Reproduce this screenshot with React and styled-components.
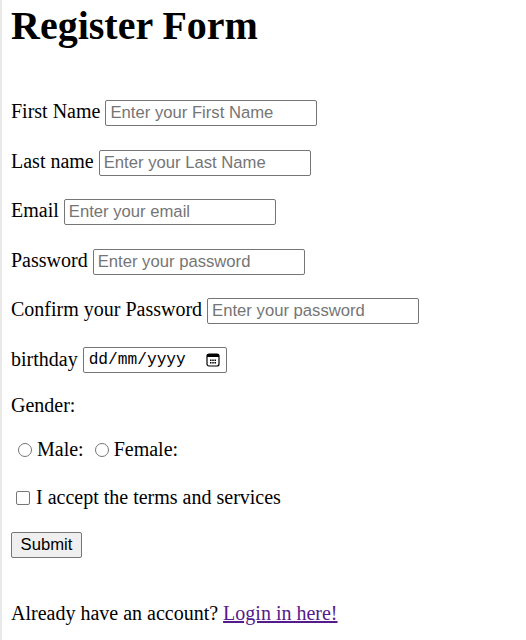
import React from 'react';
import styled, { createGlobalStyle } from 'styled-components';

const GlobalStyle = createGlobalStyle`
  html, body {
    margin: 0;
    padding: 0;
    background: #ffffff;
  }
  body {
    font-family: "Liberation Serif", "Times New Roman", serif;
    font-size: 20px;
    color: #000000;
  }
`;

const Page = styled.div`
  min-height: 100vh;
  box-sizing: border-box;
  border-left: 2px solid #e9e9e9;
  padding: 3px 0 0 9px;
`;

const Title = styled.h1`
  margin: 0;
  font-size: 40px;
  line-height: 46px;
  font-weight: bold;
`;

const Form = styled.form`
  display: flex;
  flex-direction: column;
  align-items: flex-start;
`;

const Field = styled.div`
  display: flex;
  align-items: ${(p) => (p.$center ? 'center' : 'baseline')};
  gap: 5px;
  margin-top: ${(p) => p.$mt || 23.5}px;
  line-height: 23px;
`;

const Label = styled.label`
  white-space: nowrap;
`;

const TextInput = styled.input`
  box-sizing: border-box;
  width: 212px;
  height: 26px;
  margin: 0;
  padding: 0 4px;
  border: 1px solid #767676;
  border-radius: 2px;
  font-family: "Liberation Sans", Arial, sans-serif;
  font-size: 16.67px;
  color: #000;
  background: #fff;

  &::placeholder {
    color: #757575;
  }
`;

const DateBox = styled.div`
  box-sizing: border-box;
  display: inline-flex;
  align-items: center;
  width: 144px;
  height: 26px;
  padding: 0 6px 0 5px;
  border: 1px solid #767676;
  border-radius: 2px;
  background: #fff;
`;

const DateInput = styled.input`
  flex: 1;
  min-width: 0;
  border: none;
  outline: none;
  padding: 0;
  margin: 0;
  font-family: "Liberation Mono", "DejaVu Sans Mono", monospace;
  font-size: 16.2px;
  color: #000;
  background: transparent;

  &::placeholder {
    color: #000;
  }
`;

const Plain = styled.p`
  margin: ${(p) => p.$mt}px 0 0;
  line-height: 23px;
`;

const ChoiceRow = styled.div`
  display: flex;
  align-items: baseline;
  margin-top: ${(p) => p.$mt}px;
  line-height: 23px;
`;

const Radio = styled.input.attrs({ type: 'radio' })`
  appearance: none;
  flex-shrink: 0;
  box-sizing: border-box;
  width: 14px;
  height: 14px;
  margin: 0 5px 0 ${(p) => p.$ml}px;
  border: 1px solid #767676;
  border-radius: 50%;
  background: #fff;
  align-self: center;
  position: relative;
  top: 1px;

  &:checked {
    border: 4px solid #0075ff;
  }
`;

const Checkbox = styled.input.attrs({ type: 'checkbox' })`
  appearance: none;
  flex-shrink: 0;
  box-sizing: border-box;
  width: 14px;
  height: 14px;
  margin: 0 6px 0 5px;
  border: 1px solid #767676;
  border-radius: 2px;
  background: #fff;
  align-self: center;
  position: relative;
  top: 1px;

  &:checked {
    background: #0075ff;
    border-color: #0075ff;
  }
`;

const Button = styled.button`
  margin-top: 23.5px;
  box-sizing: border-box;
  width: 71px;
  height: 26px;
  padding: 0;
  border: 1px solid #767676;
  border-radius: 2px;
  background: #efefef;
  font-family: "Liberation Sans", Arial, sans-serif;
  font-size: 16.67px;
  color: #000;
`;

const Footer = styled.p`
  margin: 43.5px 0 0;
  line-height: 23px;

  a {
    color: #551a8b;
    text-decoration: underline;
  }
`;

const CalendarIcon = () => (
  <svg width="14" height="14" viewBox="0 0 14 14" fill="none">
    <rect x="1" y="1" width="12" height="12" rx="2" stroke="#000" strokeWidth="1.2" />
    <rect x="1" y="1" width="12" height="3" fill="#000" />
    <rect x="4" y="6.5" width="1.5" height="1.5" fill="#000" />
    <rect x="6.25" y="6.5" width="1.5" height="1.5" fill="#000" />
    <rect x="8.5" y="6.5" width="1.5" height="1.5" fill="#000" />
    <rect x="4" y="9" width="1.5" height="1.5" fill="#000" />
    <rect x="6.25" y="9" width="1.5" height="1.5" fill="#000" />
    <rect x="8.5" y="9" width="1.5" height="1.5" fill="#000" />
  </svg>
);

const App = () => {
  return (
    <Page>
      <GlobalStyle />
      <Title>Register Form</Title>
      <Form onSubmit={(e) => e.preventDefault()}>
        <Field $mt={51}>
          <Label htmlFor="first">First Name</Label>
          <TextInput id="first" type="text" placeholder="Enter your First Name" />
        </Field>
        <Field>
          <Label htmlFor="last">Last name</Label>
          <TextInput id="last" type="text" placeholder="Enter your Last Name" />
        </Field>
        <Field>
          <Label htmlFor="email">Email</Label>
          <TextInput id="email" type="email" placeholder="Enter your email" />
        </Field>
        <Field>
          <Label htmlFor="pass">Password</Label>
          <TextInput id="pass" type="password" placeholder="Enter your password" />
        </Field>
        <Field>
          <Label htmlFor="confirm">Confirm your Password</Label>
          <TextInput id="confirm" type="password" placeholder="Enter your password" />
        </Field>
        <Field $center $mt={22.5}>
          <Label htmlFor="birthday">birthday</Label>
          <DateBox>
            <DateInput id="birthday" type="text" placeholder="dd/mm/yyyy" />
            <CalendarIcon />
          </DateBox>
        </Field>
        <Plain $mt={21}>Gender:</Plain>
        <ChoiceRow $mt={21}>
          <Radio name="gender" id="male" $ml={7} />
          <Label htmlFor="male">Male:</Label>
          <Radio name="gender" id="female" $ml={11} />
          <Label htmlFor="female">Female:</Label>
        </ChoiceRow>
        <ChoiceRow $mt={25}>
          <Checkbox id="terms" />
          <Label htmlFor="terms">I accept the terms and services</Label>
        </ChoiceRow>
        <Button type="submit">Submit</Button>
      </Form>
      <Footer>
        Already have an account? <a href="#login">Login in here!</a>
      </Footer>
    </Page>
  );
};

export default App;
